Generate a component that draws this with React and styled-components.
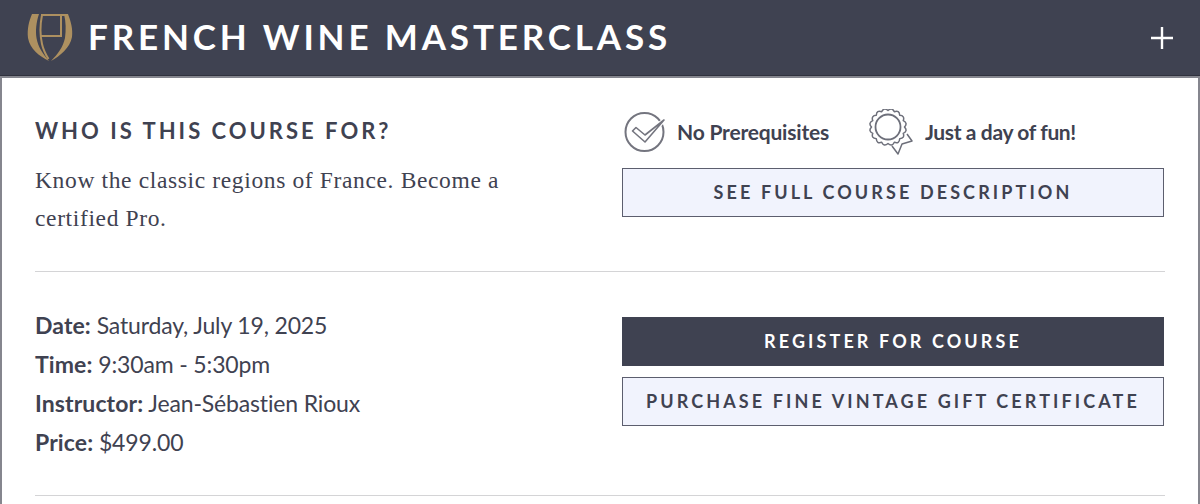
import React from 'react';
import styled, { createGlobalStyle } from 'styled-components';

const GlobalStyle = createGlobalStyle`
  html, body {
    margin: 0;
    padding: 0;
    background: #fff;
  }
  body {
    font-family: "Lato", "Liberation Sans", sans-serif;
    color: #3f4251;
    overflow: hidden;
  }
`;

const Panel = styled.section`
  width: 1200px;
  height: 504px;
  box-sizing: border-box;
  overflow: hidden;
`;

const Header = styled.header`
  height: 75px;
  background: #3f4251;
  border-bottom: 1px solid #30323e;
  display: flex;
  align-items: center;
  padding: 0 27px 0 27px;
`;

const HeaderTitle = styled.h1`
  margin: 0 0 0 15px;
  padding-bottom: 3px;
  flex: 1;
  font-size: 35px;
  font-weight: 700;
  letter-spacing: 3.85px;
  color: #fff;
  line-height: 1;
`;

const Body = styled.div`
  border: solid #85868e;
  border-width: 2px 2px 0 2px;
  padding: 0 33px;
  height: 428px;
  box-sizing: border-box;
`;

const Row = styled.div`
  display: grid;
  grid-template-columns: 587px 1fr;
  border-bottom: 1px solid #d4d4d6;
  box-sizing: border-box;
  height: ${p => p.$height}px;
  padding-top: ${p => p.$top}px;
`;

const SectionTitle = styled.h2`
  margin: 0 0 16px;
  padding-top: 7px;
  font-size: 22px;
  font-weight: 700;
  letter-spacing: 3px;
  line-height: 28px;
`;

const Lead = styled.p`
  margin: 0;
  max-width: 500px;
  font-family: "Liberation Serif", serif;
  font-size: 23.5px;
  line-height: 38px;
  letter-spacing: 0.64px;
`;

const Perks = styled.div`
  display: flex;
  align-items: center;
  height: 44px;
  margin: 0 0 14px 2px;
`;

const Perk = styled.div`
  display: flex;
  align-items: center;
  gap: ${p => p.$gap}px;
  margin-right: ${p => p.$right || 0}px;
`;

const PerkLabel = styled.span`
  padding-bottom: 2px;
  font-size: 21px;
  font-weight: 700;
  letter-spacing: ${p => p.$spacing}px;
`;

const Actions = styled.div`
  padding-top: ${p => p.$top || 0}px;
`;

const ActionButton = styled.button`
  display: block;
  width: 542px;
  height: 49px;
  margin-bottom: 11px;
  padding: 0 0 1px;
  box-sizing: border-box;
  border: 1px solid ${p => p.$primary ? '#3f4251' : '#5c5e6e'};
  background: ${p => p.$primary ? '#3f4251' : '#f1f3fd'};
  color: ${p => p.$primary ? '#fff' : '#3f4251'};
  font-family: "Lato", "Liberation Sans", sans-serif;
  font-size: 18px;
  font-weight: 700;
  letter-spacing: 3.1px;
  text-transform: uppercase;
`;

const Facts = styled.dl`
  margin: 0;
`;

const Fact = styled.div`
  font-size: 23px;
  line-height: 39px;
  letter-spacing: -0.15px;
`;

const FactLabel = styled.b`
  font-weight: 700;
  letter-spacing: 0.1px;
`;

const Logo = () => (
  <svg width="46" height="50" viewBox="0 0 46 50" fill="#ad9060" stroke="none">
    <path d="M5 1H12C9 10 8.500 18 9.500 25C11 34 16 41 22 48C12 43 3 36 1 25C0 16 2 8 5 1Z" />
    <path d="M37 1H41C44 9 46 16 45 24C43 35 33 43 24 48C31 41 36 34 38 25C39 17 39 9 37 1Z" />
    <path d="M14 1H41V3H14Z" />
    <path d="M15 2C13 12 13 22 15 31C16.500 38 19 42 21.500 46M34 2V24M14.500 23H35" fill="none" stroke="#ad9060" strokeWidth="2" />
  </svg>
);

const CheckIcon = () => (
  <svg width="42" height="42" viewBox="0 0 42 42" fill="none" stroke="#74757f">
    <circle cx="20.500" cy="21" r="19" strokeWidth="2" />
    <path d="M8.500 20L12 16.500L21 24L40 9L21 31Z" fill="#fff" stroke="#fff" strokeWidth="4" strokeLinejoin="round" />
    <path d="M8.500 20L12 16.500L21 24L40 9L21 31Z" strokeWidth="1.600" strokeLinejoin="round" />
  </svg>
);

// scalloped edge of the rosette, one bump per step
const rosette = (cx, cy, r, bumps) => {
  const point = (a, radius) => `${(cx + Math.cos(a) * radius).toFixed(2)} ${(cy + Math.sin(a) * radius).toFixed(2)}`;
  const step = (Math.PI * 2) / bumps;
  let d = `M${point(0, r)}`;
  for (let i = 0; i < bumps; i++) {
    d += `Q${point(step * (i + 0.5), r + 4)} ${point(step * (i + 1), r)}`;
  }
  return d + 'Z';
};

const AwardIcon = () => (
  <svg width="46" height="46" viewBox="0 0 46 46" fill="none" stroke="#6d6f7a" strokeWidth="1.500" strokeLinejoin="round">
    <path d={rosette(20, 18, 16.500, 16)} />
    <circle cx="20" cy="18" r="12.500" strokeWidth="1.800" />
    <path d="M24 37L30 45L34 35L44 32L39 25" />
  </svg>
);

const PlusIcon = () => (
  <svg width="22" height="22" viewBox="0 0 22 22" stroke="#fff" strokeWidth="2.400">
    <path d="M0 11H22M11 0V22" />
  </svg>
);

const App = () => {
  return (
    <Panel>
      <GlobalStyle />
      <Header>
        <Logo />
        <HeaderTitle>FRENCH WINE MASTERCLASS</HeaderTitle>
        <PlusIcon />
      </Header>
      <Body>
        <Row $height={194} $top={32}>
          <div>
            <SectionTitle>WHO IS THIS COURSE FOR?</SectionTitle>
            <Lead>Know the classic regions of France. Become a certified Pro.</Lead>
          </div>
          <Actions>
            <Perks>
              <Perk $gap={11} $right={39}>
                <CheckIcon />
                <PerkLabel $spacing={-0.2}>No Prerequisites</PerkLabel>
              </Perk>
              <Perk $gap={11}>
                <AwardIcon />
                <PerkLabel $spacing={-0.37}>Just a day of fun!</PerkLabel>
              </Perk>
            </Perks>
            <ActionButton>See full course description</ActionButton>
          </Actions>
        </Row>
        <Row $height={224} $top={34}>
          <Facts>
            <Fact><FactLabel>Date:</FactLabel> Saturday, July 19, 2025</Fact>
            <Fact><FactLabel>Time:</FactLabel> 9:30am - 5:30pm</Fact>
            <Fact><FactLabel>Instructor:</FactLabel> Jean-Sébastien Rioux</Fact>
            <Fact><FactLabel>Price:</FactLabel> $499.00</Fact>
          </Facts>
          <Actions $top={11}>
            <ActionButton $primary>Register for course</ActionButton>
            <ActionButton>Purchase fine vintage gift certificate</ActionButton>
          </Actions>
        </Row>
      </Body>
    </Panel>
  );
};

export default App;
